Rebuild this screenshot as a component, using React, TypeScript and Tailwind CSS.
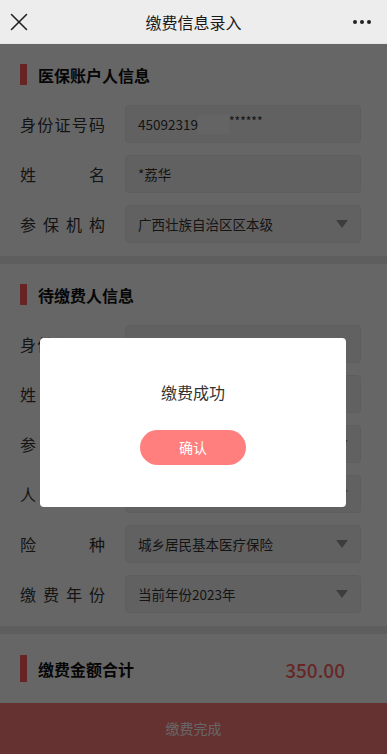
import { X } from "lucide-react";

const font = { fontFamily: '"Noto Sans CJK SC", "Noto Sans", sans-serif' };

function Label({ text }: { text: string }) {
  return (
    <div className="w-[85px] flex justify-between text-[16px] text-[#333]">
      {text.split("").map((c, i) => (
        <span key={i}>{c}</span>
      ))}
    </div>
  );
}

function Caret() {
  return (
    <svg width="12" height="8" viewBox="0 0 12 8" className="shrink-0">
      <path d="M0 0h12L6 8z" fill="#9a9a9a" />
    </svg>
  );
}

function Row({ label, value, select, children }: { label: string; value?: string; select?: boolean; children?: React.ReactNode }) {
  return (
    <div className="flex items-center h-[38px]">
      <Label text={label} />
      <div className="ml-5 flex-1 h-full flex items-center justify-between px-3 bg-[#f3f3f3] border border-[#ebebeb] rounded-[4px] text-[13.5px] text-[#333]">
        <div className="flex items-center">{children ?? value}</div>
        {select && <Caret />}
      </div>
    </div>
  );
}

function Title({ text, tall }: { text: string; tall?: boolean }) {
  return (
    <div className={`flex items-center gap-[11px] ${tall ? "h-[27px]" : "h-[21px]"}`}>
      <div className={`w-[7px] bg-[#ff5a5a] ${tall ? "h-[27px]" : "h-[21px]"}`} />
      <span className="text-[16px] font-bold text-[#111] leading-none">{text}</span>
    </div>
  );
}

export default function App() {
  return (
    <div className="min-h-[754px] bg-[#ececec] flex flex-col" style={font}>
      <div className="h-11 bg-[#ededed] flex items-center justify-between pl-[4px] pr-3 border-b border-[#e4e4e4]">
        <X className="w-[30px] h-[30px] text-[#222]" strokeWidth={1.25} />
        <span className="text-[16px] text-[#1a1a1a]">缴费信息录入</span>
        <div className="flex gap-[3px] pr-1">
          <span className="w-1 h-1 rounded-full bg-[#222]" />
          <span className="w-1 h-1 rounded-full bg-[#222]" />
          <span className="w-1 h-1 rounded-full bg-[#222]" />
        </div>
      </div>

      <div className="bg-white pl-5 pr-[26px] pt-5 pb-[13px]">
        <Title text="医保账户人信息" />
        <div className="mt-5 flex flex-col gap-3">
          <Row label="身份证号码">
            <span>45092319</span>
            <span className="w-[31px] h-[19px] bg-[#fafafa]" />
            <span className="text-[12px] -mt-[6px]">******</span>
          </Row>
          <Row label="姓名" value="*荔华" />
          <Row label="参保机构" value="广西壮族自治区区本级" select />
        </div>
      </div>

      <div className="bg-white mt-2 pl-5 pr-[26px] pt-5 pb-[13px]">
        <Title text="待缴费人信息" />
        <div className="mt-5 flex flex-col gap-3">
          <Row label="身份证号码" value="" />
          <Row label="姓名" value="" />
          <Row label="参保机构" value="" select />
          <Row label="人员类别" value="" select />
          <Row label="险种" value="城乡居民基本医疗保险" select />
          <Row label="缴费年份" value="当前年份2023年" select />
        </div>
      </div>

      <div className="bg-white mt-2 h-[69px] pl-5 pr-[42px] flex items-center justify-between">
        <Title text="缴费金额合计" tall />
        <span className="text-[19px] text-[#ff6262] font-medium mt-1">350.00</span>
      </div>

      <button className="h-[51px] bg-[#ff7a7a] text-white text-[14px] mt-auto">缴费完成</button>

      <div className="fixed left-0 right-0 bottom-0 top-11 bg-black/60" />

      <div className="fixed left-[40px] top-[338px] w-[306px] h-[169px] bg-white rounded-[4px] flex flex-col items-center">
        <span className="mt-[42px] text-[16px] text-[#333]">缴费成功</span>
        <button className="mt-[26px] w-[106px] h-[35px] rounded-full bg-[#ff7f7f] text-white text-[14px]">确认</button>
      </div>
    </div>
  );
}
